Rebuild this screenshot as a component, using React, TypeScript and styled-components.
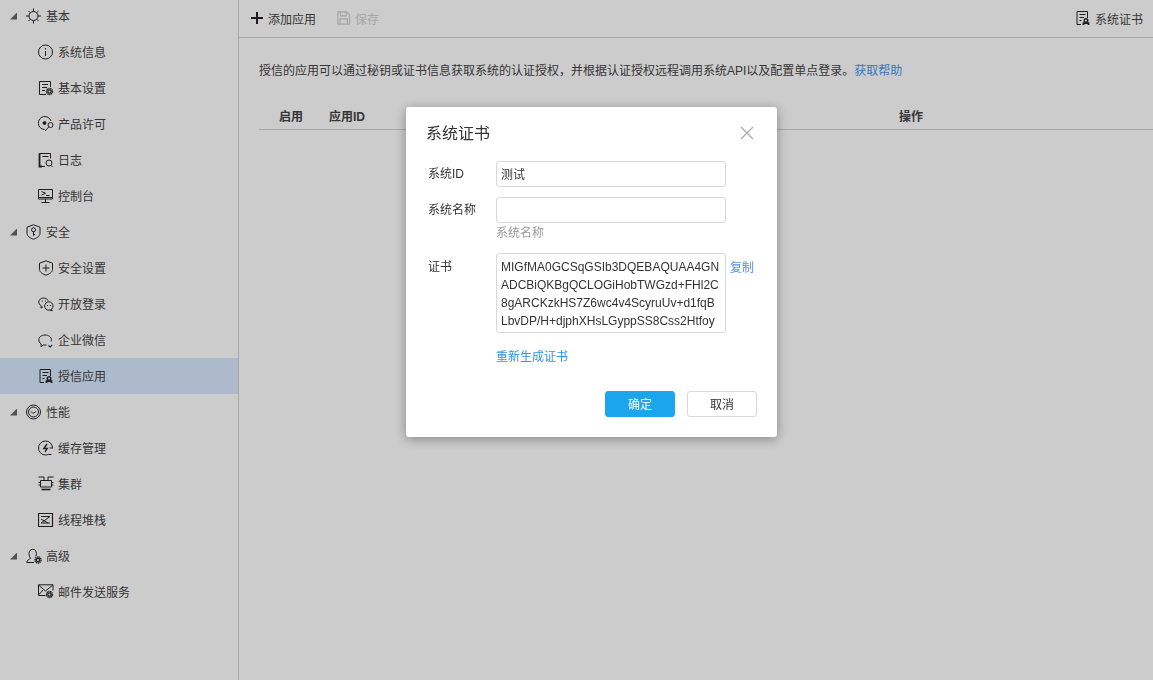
import React from 'react';
import styled, { createGlobalStyle } from 'styled-components';

const GlobalStyle = createGlobalStyle`
  html, body {
    margin: 0;
    height: 100%;
    background: #ffffff;
    overflow: hidden;
  }
  body, input, textarea, button {
    font-family: "Liberation Sans", "Noto Sans CJK SC", sans-serif;
    font-size: 12px;
    color: #444444;
  }
`;

const Page = styled.div`
  display: flex;
  width: 100%;
  height: 680px;
  overflow: hidden;
`;

const Sidebar = styled.nav`
  flex: 0 0 238px;
  height: 100%;
  border-right: 1px solid #d4d4d4;
  overflow: hidden;
`;

const NavList = styled.div`
  margin-top: -2px;
`;

const Row = styled.div<{ $active?: boolean }>`
  display: flex;
  align-items: center;
  height: 36px;
  background: ${props => (props.$active ? '#d7e9fe' : 'transparent')};
`;

const GroupRow = styled(Row)`
  padding-left: 10px;
`;

const ItemRow = styled(Row)`
  padding-left: 38px;
`;

const RowLabel = styled.span`
  margin-bottom: 2px;
`;

const Caret = styled.span`
  width: 7px;
  height: 7px;
  margin-right: 9px;
  background: #666666;
  clip-path: polygon(100% 0, 100% 100%, 0 100%);
`;

const Glyph = styled.svg<{ $muted?: boolean; $size?: number }>`
  flex: none;
  width: ${props => props.$size || 16}px;
  height: ${props => props.$size || 16}px;
  margin-right: 4px;
  fill: none;
  stroke: ${props => (props.$muted ? '#d0d0d0' : '#262626')};
  stroke-width: 1;
`;

const Main = styled.main`
  flex: 1;
  min-width: 0;
`;

const Toolbar = styled.div`
  display: flex;
  align-items: center;
  height: 36px;
  padding: 0 10px 1px 12px;
  border-bottom: 1px solid #d4d4d4;
`;

const ToolButton = styled.div<{ $disabled?: boolean }>`
  display: flex;
  align-items: center;
  margin-right: 21px;
  color: ${props => (props.$disabled ? '#d0d0d0' : '#444444')};

  &:last-child {
    margin: 0 0 0 auto;
  }
`;

const PlusIcon = styled.svg`
  width: 12px;
  height: 12px;
  margin-right: 5px;
  stroke: #222222;
  stroke-width: 2;
`;

const Description = styled.p`
  margin: 24px 0 0 20px;
  line-height: 18px;
`;

const Link = styled.a`
  color: #4a94f2;
  text-decoration: none;
`;

const TableHead = styled.div`
  display: grid;
  grid-template-columns: 50px 570px 1fr;
  margin: 23px 0 0 20px;
  padding-left: 20px;
  height: 26px;
  line-height: 28px;
  font-weight: bold;
  border-bottom: 1px solid #d4d4d4;
`;

const Overlay = styled.div`
  position: fixed;
  inset: 0;
  padding: 107px 0 0 406px;
  background: rgba(0, 0, 0, 0.2);
`;

const Dialog = styled.div`
  box-sizing: border-box;
  width: 371px;
  padding: 14px 20px 20px;
  background: #ffffff;
  border-radius: 3px;
  box-shadow: 0 2px 12px rgba(0, 0, 0, 0.35);
`;

const DialogHead = styled.div`
  display: flex;
  align-items: center;
  justify-content: space-between;
  height: 24px;
  margin-bottom: 16px;
`;

const DialogTitle = styled.h3`
  margin: 0 0 2px;
  font-size: 16px;
  font-weight: normal;
  color: #333333;
`;

const CloseIcon = styled.svg`
  width: 14px;
  height: 14px;
  margin-right: 3px;
  stroke: #aaaaaa;
  stroke-width: 1.3;
`;

const Field = styled.div`
  display: grid;
  grid-template-columns: 70px 230px 1fr;
  margin-bottom: 10px;
`;

const FieldLabel = styled.label<{ $tall?: boolean }>`
  padding-left: 2px;
  line-height: 26px;
  color: #333333;
  margin-top: ${props => (props.$tall ? '1px' : '0')};
`;

const TextInput = styled.input`
  box-sizing: border-box;
  width: 230px;
  height: 26px;
  padding: 0 4px 2px;
  border: 1px solid #d8d8d8;
  border-radius: 3px;
  outline: none;
  color: #333333;
`;

const Hint = styled.div`
  grid-column: 2;
  line-height: 18px;
  margin: 1px 0;
  color: #999999;
`;

const CertText = styled.textarea`
  box-sizing: border-box;
  display: block;
  width: 230px;
  height: 80px;
  padding: 4px;
  border: 1px solid #d8d8d8;
  border-radius: 3px;
  outline: none;
  overflow: hidden;
  resize: none;
  line-height: 18px;
  color: #333333;
`;

const CopyLink = styled(Link)`
  margin: 6px 0 0 4px;
  line-height: 18px;
`;

const Regenerate = styled(Link)`
  display: block;
  margin: 14px 0 24px 70px;
  line-height: 20px;
  color: #2e95e8;
`;

const DialogFoot = styled.div`
  display: flex;
  justify-content: flex-end;
  gap: 12px;
`;

const Button = styled.button<{ $primary?: boolean }>`
  box-sizing: border-box;
  width: 70px;
  height: 26px;
  padding: 0 0 2px;
  border: 1px solid ${props => (props.$primary ? '#1ba5ed' : '#d8d8d8')};
  border-radius: 3px;
  background: ${props => (props.$primary ? '#1ba5ed' : '#ffffff')};
  color: ${props => (props.$primary ? '#ffffff' : '#333333')};
`;

// small cog used on the corner of several icons
const Cog: React.FC<{ x: number; y: number }> = ({ x, y }) => (
  <>
    <circle cx={x} cy={y} r="3" strokeWidth="1.400" strokeDasharray="1.300 .5" />
    <circle cx={x} cy={y} r="1.700" strokeWidth="1.300" />
  </>
);

const icons: Record<string, React.ReactNode> = {
  sun: (
    <>
      <circle cx="7.500" cy="8" r="4.500" />
      <path d="M7.500 .5v3M7.500 12.500v3M0 8h3M12 8h3M2.500 3l1.800 1.800M10.700 11.200L12.500 13M2.500 13l1.800-1.800M10.700 4.800L12.500 3" />
    </>
  ),
  info: (
    <>
      <circle cx="7.500" cy="8" r="7" />
      <path d="M7.500 7v5M7.500 4v1.500" />
    </>
  ),
  docGear: (
    <>
      <path d="M8 14.500H1.500V1.500h11V7M4 4.500h6M4 7.500h5M4 10.500h3" />
      <Cog x={11.5} y={11.5} />
    </>
  ),
  license: (
    <>
      <path d="M13 5A6.500 6.500 0 1 0 6.500 13.500" />
      <circle cx="6.500" cy="7" r="1.500" fill="#262626" />
      <circle cx="12.500" cy="9" r="2.500" />
      <path d="M10.700 11L7 15" />
    </>
  ),
  log: (
    <>
      <path d="M7 14.500H1.500V1.500h11V6.500M4.500 4.500h6" />
      <path d="M1.500 1.500v13H4" strokeWidth="1.800" />
      <circle cx="11" cy="11" r="3" />
      <path d="M13 13.500l1.500 1.500" />
    </>
  ),
  console: (
    <path d="M.5 1.500h14v9.500H.5zM7.500 11v3M3.500 14.500h8M.5 9.500h14M3.500 3.500l4 1.800-4 1.800M8 7.500h3.500" />
  ),
  shieldKey: (
    <>
      <path d="M7.500 .8l6.500 2.400v6.300c0 2.700-3.500 4.800-6.500 5.700-3-.9-6.500-3-6.500-5.700V3.200z" />
      <circle cx="7.500" cy="5.800" r="2" />
      <path d="M7.500 7.800v4M7.500 10.500H9" />
    </>
  ),
  shieldPlus: (
    <>
      <path d="M8 .8l6.500 2.400v6.300c0 2.700-3.500 4.800-6.500 5.700-3-.9-6.500-3-6.500-5.700V3.200z" />
      <path d="M4.500 8h7M8 4.500v7" />
    </>
  ),
  wechat: (
    <>
      <path d="M5 11l-2 1 .3-2.200C1.500 8.800.8 7.500.8 6 .8 3.700 3 2 5.600 2c2 0 3.800 1.100 4.500 2.700" />
      <circle cx="10.800" cy="10" r="4.200" />
      <path d="M13.500 13.300l.7 1.500-2.300-.7M3.800 5h1M7 5h1M9 9.500h1M11.800 9.500h1" />
    </>
  ),
  bubble: (
    <>
      <path d="M8.500 13H5.500L3 14.800l.2-2.900C1.500 10.900.8 9.500.8 7.800c0-2.700 2.800-4.800 6.300-4.800s6.300 2.100 6.300 4.800c0 .7-.1 1.200-.4 1.800" />
      <path d="M10.500 13.500l1.700 1.500 2-2.200" strokeWidth="1.200" />
    </>
  ),
  cert: (
    <>
      <path d="M6 14.500H2V1.500h10.500V8M4.500 4.500h6M4.500 7.500h4.500M4.500 10.500h2" />
      <circle cx="11" cy="10.500" r="1.800" strokeWidth="1.400" />
      <path d="M8.500 15v-1.800h5V15" strokeWidth="1.800" />
    </>
  ),
  gauge: (
    <>
      <circle cx="7.500" cy="8" r="7" />
      <circle cx="7.500" cy="8" r="5" />
      <path d="M5 7.500l2 2 3-2" />
    </>
  ),
  cache: (
    <>
      <path d="M14.500 8A7 7 0 1 0 7.500 15c1.200 0 2.200-.3 3.200-.8" />
      <path d="M9 4L5.800 8.500h3.400L7 12" strokeWidth="1.400" />
      <path d="M11.500 8h3.500M10.500 14.500h3" />
    </>
  ),
  cluster: (
    <>
      <path d="M2.500 4.500h11v6.500h-11zM.5 6.500h2M.5 9h2M13.500 6.500h2M13.500 9h2" />
      <path d="M.5 1h5.500v3.500M15.500 1H10v3.500" />
      <path d="M3.500 13.500h9" strokeWidth="1.600" />
    </>
  ),
  stack: (
    <>
      <path d="M.5 1.500h14v13H.5z" strokeWidth="1.200" />
      <path d="M3 4.500h9l-9 6.500h9M3 7l7 4" />
    </>
  ),
  userGear: (
    <>
      <path d="M.8 14.500c.2-2.500 2.400-3.200 3.900-4.200C3.500 9 3 7.500 3 5.500 3 3 4.500 1.300 6.700 1.300S10.400 3 10.400 5.500c0 1-.2 2-.6 2.800M.8 14.500H8" />
      <Cog x={12} y={12} />
    </>
  ),
  mailGear: (
    <>
      <path d="M7.500 11.500h-7V.8h14.500V6.500M.5 1l7 6 7.300-6M.5 11l4.500-5" />
      <Cog x={11.500} y={10.500} />
    </>
  ),
  save: (
    <>
      <path d="M1 1h10l3.500 3.500V15H1z" strokeWidth="1.300" />
      <path d="M4 1v4.500h6.500V1M3.500 15V9h8.500v6" strokeWidth="1.300" />
    </>
  ),
};

const Icon: React.FC<{ name: string; muted?: boolean; size?: number }> = ({ name, muted, size }) => (
  <Glyph viewBox="0 0 16 16" $muted={muted} $size={size}>
    {icons[name]}
  </Glyph>
);

const nav = [
  {
    title: '基本',
    icon: 'sun',
    items: [
      ['系统信息', 'info'],
      ['基本设置', 'docGear'],
      ['产品许可', 'license'],
      ['日志', 'log'],
      ['控制台', 'console'],
    ],
  },
  {
    title: '安全',
    icon: 'shieldKey',
    items: [
      ['安全设置', 'shieldPlus'],
      ['开放登录', 'wechat'],
      ['企业微信', 'bubble'],
      ['授信应用', 'cert'],
    ],
  },
  {
    title: '性能',
    icon: 'gauge',
    items: [
      ['缓存管理', 'cache'],
      ['集群', 'cluster'],
      ['线程堆栈', 'stack'],
    ],
  },
  {
    title: '高级',
    icon: 'userGear',
    items: [['邮件发送服务', 'mailGear']],
  },
];

const certificate = [
  'MIGfMA0GCSqGSIb3DQEBAQUAA4GN',
  'ADCBiQKBgQCLOGiHobTWGzd+FHl2C',
  '8gARCKzkHS7Z6wc4v4ScyruUv+d1fqB',
  'LbvDP/H+djphXHsLGyppSS8Css2Htfoy',
].join('\n');

const App: React.FC = () => (
  <>
    <GlobalStyle />
    <Page>
      <Sidebar>
        <NavList>
          {nav.map(group => (
            <div key={group.title}>
              <GroupRow>
                <Caret />
                <Icon name={group.icon} />
                <RowLabel>{group.title}</RowLabel>
              </GroupRow>
              {group.items.map(([label, icon]) => (
                <ItemRow key={label} $active={label === '授信应用'}>
                  <Icon name={icon} />
                  <RowLabel>{label}</RowLabel>
                </ItemRow>
              ))}
            </div>
          ))}
        </NavList>
      </Sidebar>

      <Main>
        <Toolbar>
          <ToolButton>
            <PlusIcon viewBox="0 0 12 12">
              <path d="M6 0v12M0 6h12" />
            </PlusIcon>
            添加应用
          </ToolButton>
          <ToolButton $disabled>
            <Icon name="save" muted size={14} />
            保存
          </ToolButton>
          <ToolButton>
            <Icon name="cert" />
            系统证书
          </ToolButton>
        </Toolbar>

        <Description>
          授信的应用可以通过秘钥或证书信息获取系统的认证授权，并根据认证授权远程调用系统API以及配置单点登录。
          <Link href="#help">获取帮助</Link>
        </Description>

        <TableHead>
          <span>启用</span>
          <span>应用ID</span>
          <span>操作</span>
        </TableHead>
      </Main>
    </Page>

    <Overlay>
      <Dialog>
        <DialogHead>
          <DialogTitle>系统证书</DialogTitle>
          <CloseIcon viewBox="0 0 14 14">
            <path d="M1 1l12 12M13 1L1 13" />
          </CloseIcon>
        </DialogHead>

        <Field>
          <FieldLabel>系统ID</FieldLabel>
          <TextInput value="测试" readOnly />
        </Field>

        <Field>
          <FieldLabel>系统名称</FieldLabel>
          <TextInput value="" readOnly />
          <span />
          <Hint>系统名称</Hint>
        </Field>

        <Field>
          <FieldLabel $tall>证书</FieldLabel>
          <CertText value={certificate} readOnly spellCheck={false} />
          <CopyLink href="#copy">复制</CopyLink>
        </Field>

        <Regenerate href="#regenerate">重新生成证书</Regenerate>

        <DialogFoot>
          <Button $primary>确定</Button>
          <Button>取消</Button>
        </DialogFoot>
      </Dialog>
    </Overlay>
  </>
);

export default App;
